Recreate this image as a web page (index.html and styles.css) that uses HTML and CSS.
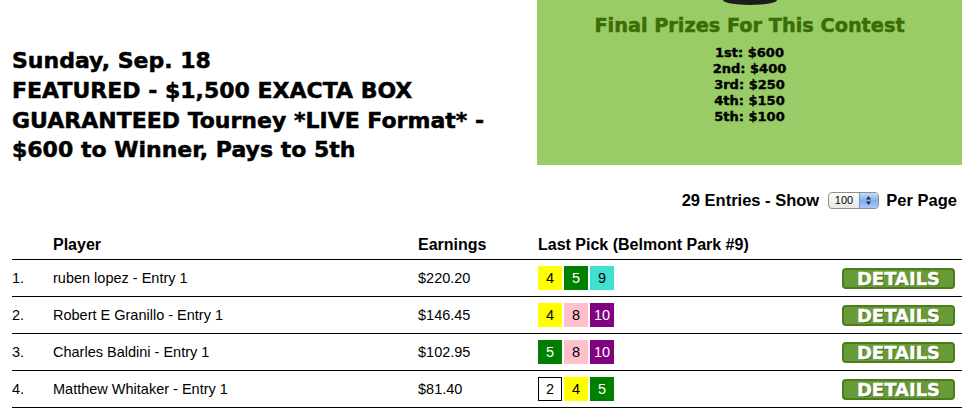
FILE: index.html
```html
<!DOCTYPE html>
<html>
<head>
<meta charset="utf-8">
<link rel="stylesheet" href="styles.css">
</head>
<body>
<div class="top">
  <h1 class="title">Sunday, Sep. 18<br>FEATURED - $1,500 EXACTA BOX<br>GUARANTEED Tourney *LIVE Format* -<br>$600 to Winner, Pays to 5th</h1>
  <div class="prizes">
    <div class="logo-arc"></div>
    <h2 class="prizes-title">Final Prizes For This Contest</h2>
    <div class="prize-list">
      <div>1st: $600</div>
      <div>2nd: $400</div>
      <div>3rd: $250</div>
      <div>4th: $150</div>
      <div>5th: $100</div>
    </div>
  </div>
</div>

<div class="entries">29 Entries - Show <span class="select"><span class="select-val">100</span><span class="select-btn"><svg width="7" height="11" viewBox="0 0 7 11"><path d="M3.5 1 L6 4.5 H1 Z M3.5 10 L6 6.5 H1 Z" fill="#1b2b45"/></svg></span></span> Per Page</div>

<div class="board">
  <div class="row head">
    <div></div>
    <div>Player</div>
    <div>Earnings</div>
    <div>Last Pick (Belmont Park #9)</div>
    <div></div>
  </div>
  <div class="row">
    <div>1.</div>
    <div>ruben lopez - Entry 1</div>
    <div>$220.20</div>
    <div class="picks"><span class="pk yellow">4</span><span class="pk green">5</span><span class="pk turq">9</span></div>
    <div><span class="details">DETAILS</span></div>
  </div>
  <div class="row">
    <div>2.</div>
    <div>Robert E Granillo - Entry 1</div>
    <div>$146.45</div>
    <div class="picks"><span class="pk yellow">4</span><span class="pk pink">8</span><span class="pk purple">10</span></div>
    <div><span class="details">DETAILS</span></div>
  </div>
  <div class="row">
    <div>3.</div>
    <div>Charles Baldini - Entry 1</div>
    <div>$102.95</div>
    <div class="picks"><span class="pk green">5</span><span class="pk pink">8</span><span class="pk purple">10</span></div>
    <div><span class="details">DETAILS</span></div>
  </div>
  <div class="row">
    <div>4.</div>
    <div>Matthew Whitaker - Entry 1</div>
    <div>$81.40</div>
    <div class="picks"><span class="pk white">2</span><span class="pk yellow">4</span><span class="pk green">5</span></div>
    <div><span class="details">DETAILS</span></div>
  </div>
</div>
</body>
</html>
```

FILE: styles.css
```css
html, body {
  margin: 0;
  padding: 0;
  background: #ffffff;
  color: #000000;
  font-family: "Liberation Sans", Arial, sans-serif;
}

.top {
  display: flex;
  align-items: flex-end;
  height: 165px;
}

.title {
  margin: 0 0 0 12px;
  font-family: "DejaVu Sans", sans-serif;
  font-weight: bold;
  font-size: 22px;
  line-height: 29.7px;
  -webkit-text-stroke: 0.5px #000000;
  flex: 1;
}

.prizes {
  width: 425px;
  height: 165px;
  margin-right: 13px;
  background: #99cc66;
  display: flex;
  flex-direction: column;
  align-items: center;
}

.logo-arc {
  width: 54px;
  height: 5px;
  background: #1c1c1c;
  border-radius: 0 0 27px 27px / 0 0 5px 5px;
}

.prizes-title {
  margin: 9px 0 0 0;
  font-family: "DejaVu Sans", sans-serif;
  font-weight: bold;
  font-size: 19.3px;
  line-height: 24px;
  color: #3b6c05;
  -webkit-text-stroke: 0.5px #3b6c05;
}

.prize-list {
  margin-top: 7px;
  font-family: "DejaVu Sans", sans-serif;
  font-weight: bold;
  font-size: 13px;
  line-height: 16px;
  text-align: center;
  -webkit-text-stroke: 0.4px #000000;
}

.entries {
  margin-top: 25px;
  padding-right: 18px;
  text-align: right;
  font-weight: bold;
  font-size: 16.5px;
  line-height: 20px;
}

.select {
  display: inline-flex;
  vertical-align: middle;
  box-sizing: border-box;
  width: 51px;
  height: 17px;
  margin: -2px 3px 0 4px;
  border: 1px solid #8f8f8f;
  border-radius: 4px;
  overflow: hidden;
  background: linear-gradient(#ffffff, #e6e6e6);
  font-weight: normal;
  font-size: 11px;
  line-height: 15px;
}

.select-val {
  flex: 1;
  padding-left: 6px;
  text-align: left;
}

.select-btn {
  width: 18px;
  display: flex;
  align-items: center;
  justify-content: center;
  border-left: 1px solid #7d95bd;
  background: linear-gradient(#c9dcf6, #7fb0ee 50%, #a7c9f5);
}

.board {
  margin: 0 13px 0 12px;
}

.row {
  display: grid;
  grid-template-columns: 41px 365px 120px 1fr auto;
  align-items: center;
  height: 36px;
  border-bottom: 1px solid #000000;
  font-size: 14.5px;
  padding-right: 7px;
}

.row.head {
  height: auto;
  align-items: end;
  padding-top: 26px;
  padding-bottom: 5px;
  font-weight: bold;
  font-size: 16px;
  line-height: 18px;
}

.picks {
  display: flex;
  gap: 2px;
}

.pk {
  box-sizing: border-box;
  width: 24px;
  height: 24px;
  display: flex;
  align-items: center;
  justify-content: center;
  font-size: 14.5px;
}

.yellow { background: #ffff00; color: #000000; }
.green { background: #008000; color: #ffffff; }
.turq { background: #40e0d0; color: #000000; }
.pink { background: #ffc0cb; color: #000000; }
.purple { background: #800080; color: #ffffff; }
.white { background: #ffffff; color: #000000; border: 1px solid #000000; }

.details {
  display: block;
  box-sizing: border-box;
  width: 113px;
  height: 21px;
  border: 2px solid #4b7d1c;
  border-radius: 4px;
  background: #689b36;
  color: #ffffff;
  text-align: center;
  font-family: "DejaVu Sans", sans-serif;
  font-weight: bold;
  font-size: 18px;
  line-height: 17px;
  -webkit-text-stroke: 0.4px #ffffff;
  text-shadow: 1px 1px 0 #3e6613;
}
```
